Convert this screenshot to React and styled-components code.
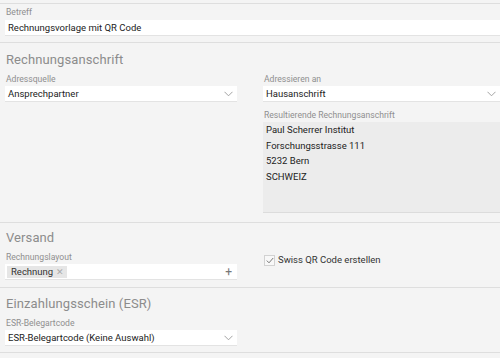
import React from 'react';
import styled, { createGlobalStyle } from 'styled-components';

const GlobalStyle = createGlobalStyle`
    html, body {
        margin: 0;
        padding: 0;
        background: #f4f4f4;
    }
    body {
        font-family: Roboto, 'Liberation Sans', Arial, sans-serif;
    }
`;

const Page = styled.div`
    width: 500px;
    height: 358px;
    overflow: hidden;
    padding-top: 3px;
    box-sizing: border-box;
    background: #f4f4f4;
`;

const Section = styled.section`
    border-top: 1px solid #dedede;
    padding: ${(props) => props.pad || '7px 2px 7px 5px'};
`;

const Heading = styled.h2`
    margin: 0 0 4px 1px;
    font-size: 13px;
    line-height: 18px;
    font-weight: 400;
    color: #8c8c8c;
    letter-spacing: 0.1px;
`;

const Columns = styled.div`
    display: grid;
    grid-template-columns: 232px 1fr;
    column-gap: 26px;
    align-items: start;
`;

const Field = styled.div`
    display: flex;
    flex-direction: column;
    & + & {
        margin-top: 7px;
    }
`;

const Label = styled.label`
    font-size: 8.6px;
    line-height: 12px;
    color: #8f8f8f;
    padding-left: 1px;
    margin-bottom: ${(props) => props.gap ?? 1}px;
`;

const Control = styled.div`
    height: 15px;
    background: #fff;
    border-bottom: 1px solid #e3e3e3;
    display: flex;
    align-items: center;
    padding: 0 3px 0 3px;
    font-size: 9.5px;
    color: #222;
`;

const Value = styled.span`
    flex: 1;
    white-space: nowrap;
`;

const Chevron = styled.svg`
    width: 9px;
    height: 6px;
    margin-right: 1px;
    flex-shrink: 0;
`;

const AddressBox = styled.div`
    height: 90px;
    background: #ececec;
    border-bottom: 1px solid #dcdcdc;
    padding: 0 3px;
    font-size: 9.5px;
    line-height: 15.6px;
    color: #222;
`;

const Tag = styled.span`
    display: inline-flex;
    align-items: center;
    gap: 3px;
    height: 12px;
    background: #e6e6e6;
    padding: 0 3px 0 4px;
    margin-left: -1px;
    font-size: 9.5px;
    color: #333;
`;

const TagRemove = styled.span`
    color: #aaa;
    font-size: 9px;
`;

const Plus = styled.span`
    color: #777;
    font-size: 12px;
    line-height: 1;
    margin-right: 2px;
`;

const CheckRow = styled.div`
    display: flex;
    align-items: center;
    gap: 3px;
    margin-top: 3px;
    margin-left: 1px;
    font-size: 9.5px;
    line-height: 12px;
    color: #333;
`;

const CheckBox = styled.span`
    width: 9px;
    height: 9px;
    border: 1px solid #d2d2d2;
    background: #f8f8f8;
    display: inline-flex;
    align-items: center;
    justify-content: center;
`;

function Select({ value }) {
    return (
        <Control>
            <Value>{value}</Value>
            <Chevron viewBox="0 0 9 6">
                <path d="M0.5 0.8 L4.5 4.8 L8.5 0.8" fill="none" stroke="#999" strokeWidth="0.9" />
            </Chevron>
        </Control>
    );
}

export default function App() {
    return (
        <Page>
            <GlobalStyle />
            <Section pad="2px 0 6px 5px">
                <Field>
                    <Label gap={2}>Betreff</Label>
                    <Control>
                        <Value>Rechnungsvorlage mit QR Code</Value>
                    </Control>
                </Field>
            </Section>

            <Section pad="8px 0 9px 5px">
                <Heading>Rechnungsanschrift</Heading>
                <Columns>
                    <Field>
                        <Label>Adressquelle</Label>
                        <Select value="Ansprechpartner" />
                    </Field>
                    <div>
                        <Field>
                            <Label>Adressieren an</Label>
                            <Select value="Hausanschrift" />
                        </Field>
                        <Field>
                            <Label>Resultierende Rechnungsanschrift</Label>
                            <AddressBox>
                                Paul Scherrer Institut
                                <br />
                                Forschungsstrasse 111
                                <br />
                                5232 Bern
                                <br />
                                SCHWEIZ
                            </AddressBox>
                        </Field>
                    </div>
                </Columns>
            </Section>

            <Section pad="6px 0 7px 5px">
                <Heading>Versand</Heading>
                <Columns>
                    <Field>
                        <Label>Rechnungslayout</Label>
                        <Control>
                            <Value>
                                <Tag>
                                    Rechnung <TagRemove>✕</TagRemove>
                                </Tag>
                            </Value>
                            <Plus>+</Plus>
                        </Control>
                    </Field>
                    <CheckRow>
                        <CheckBox>
                            <svg width="8" height="7" viewBox="0 0 8 7">
                                <path d="M0.8 3.6 L3 5.8 L7.2 1" fill="none" stroke="#777" strokeWidth="1" />
                            </svg>
                        </CheckBox>
                        Swiss QR Code erstellen
                    </CheckRow>
                </Columns>
            </Section>

            <Section pad="7px 0 6px 5px">
                <Heading>Einzahlungsschein (ESR)</Heading>
                <Columns>
                    <Field>
                        <Label>ESR-Belegartcode</Label>
                        <Select value="ESR-Belegartcode (Keine Auswahl)" />
                    </Field>
                </Columns>
            </Section>
            <Section />
        </Page>
    );
}
